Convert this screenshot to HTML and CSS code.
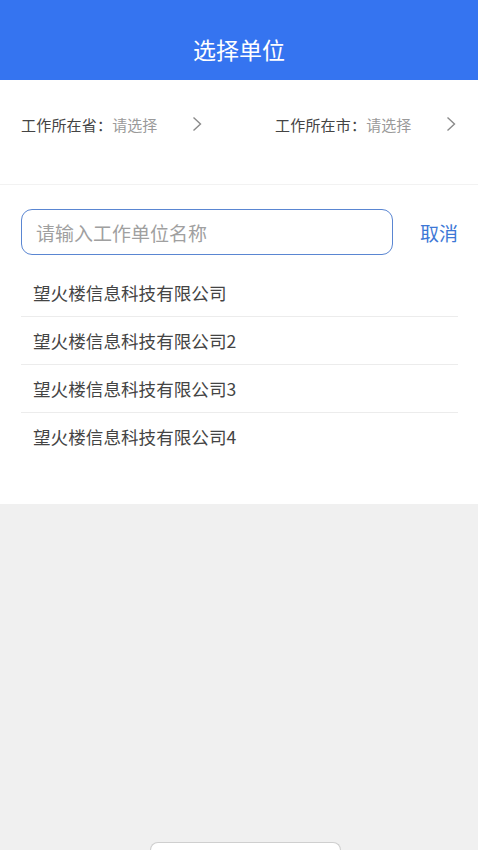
FILE: index.html
```html
<!DOCTYPE html>
<html lang="zh">
<head>
<meta charset="utf-8">
<link rel="stylesheet" href="styles.css">
</head>
<body>
<div class="page">
  <header class="topbar"><h1 class="title">选择单位</h1></header>
  <section class="region">
    <div class="pick">
      <span class="label">工作所在省：</span><span class="hint">请选择</span>
      <svg class="chev" viewBox="0 0 10 16" width="10" height="16"><path d="M1.5 1.5 L8.5 8 L1.5 14.5" fill="none" stroke="#8a8a8a" stroke-width="1.4"/></svg>
    </div>
    <div class="pick">
      <span class="label">工作所在市：</span><span class="hint">请选择</span>
      <svg class="chev" viewBox="0 0 10 16" width="10" height="16"><path d="M1.5 1.5 L8.5 8 L1.5 14.5" fill="none" stroke="#8a8a8a" stroke-width="1.4"/></svg>
    </div>
  </section>
  <section class="search-block">
    <div class="search-row">
      <div class="search-box"><span class="placeholder">请输入工作单位名称</span></div>
      <span class="cancel">取消</span>
    </div>
    <ul class="list">
      <li class="item">望火楼信息科技有限公司</li>
      <li class="item">望火楼信息科技有限公司2</li>
      <li class="item">望火楼信息科技有限公司3</li>
      <li class="item">望火楼信息科技有限公司4</li>
    </ul>
  </section>
  <div class="rest">
    <div class="bottom-btn"></div>
  </div>
</div>
</body>
</html>
```

FILE: styles.css
```css
* { box-sizing: border-box; }
html, body { margin: 0; padding: 0; }
body {
  font-family: "Noto Sans CJK SC", "Noto Sans", sans-serif;
  background: #f0f0f0;
  width: 478px;
  height: 850px;
  overflow: hidden;
}
.page { display: flex; flex-direction: column; height: 850px; }
.topbar {
  height: 80px;
  background: #3574f0;
  display: flex;
  align-items: flex-end;
  justify-content: center;
  padding-bottom: 15px;
}
.title {
  margin: 0;
  color: #fff;
  font-size: 23px;
  font-weight: normal;
  line-height: 32px;
}
.region {
  background: #fff;
  height: 105px;
  display: flex;
  padding: 32px 0 0 21px;
  border-bottom: 1px solid #f2f2f2;
}
.pick {
  flex: 0 0 254px;
  display: flex;
  align-items: center;
  height: 24px;
}
.pick:last-child { flex: 0 0 auto; }
.label { font-size: 15px; color: #444; letter-spacing: 0.2px; }
.hint { font-size: 15px; color: #9a9a9a; }
.chev { margin-left: 35px; }
.search-block {
  background: #fff;
  height: 319px;
  padding: 24px 20px 0 21px;
}
.search-row { display: flex; align-items: center; }
.search-box {
  width: 372px;
  height: 46px;
  border: 1px solid #5a86d2;
  border-radius: 11px;
  display: flex;
  align-items: center;
  padding-left: 14px;
}
.placeholder { font-size: 19px; color: #a0a0a0; }
.cancel { margin-left: 27px; font-size: 19px; color: #3d78d6; }
.list { list-style: none; margin: 14px 0 0; padding: 0; }
.item {
  height: 48px;
  line-height: 47px;
  padding-left: 12px;
  font-size: 17.6px;
  color: #444;
  border-bottom: 1px solid #ececec;
}
.item:last-child { border-bottom: none; }
.rest { flex: 1; display: flex; justify-content: center; align-items: flex-end; }
.bottom-btn {
  width: 191px;
  height: 8px;
  margin-left: 12px;
  background: #fff;
  border: 1px solid #cfcfcf;
  border-bottom: none;
  border-radius: 8px 8px 0 0;
}
```
